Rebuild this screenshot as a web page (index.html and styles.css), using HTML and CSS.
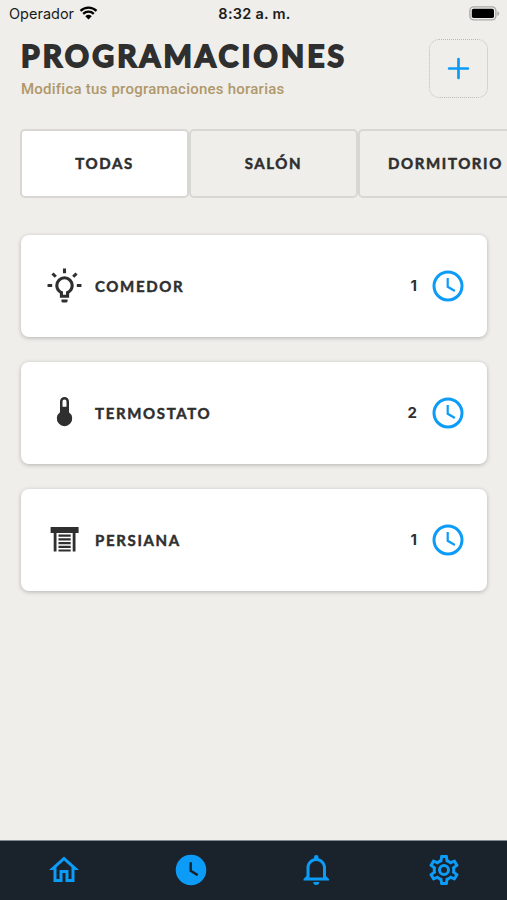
FILE: index.html
```html
<!DOCTYPE html>
<html lang="es">
<head>
    <meta charset="UTF-8">
    <meta name="viewport" content="width=device-width, initial-scale=1.0">
    <title>Programaciones</title>
    <link rel="stylesheet" href="styles.css">
</head>
<body>
    <div class="status-bar">
        <div class="carrier">
            <span>Operador</span>
            <svg class="wifi" viewBox="0 0 18 14">
                <path d="M1 4.9a11.6 11.6 0 0 1 16 0M3.7 7.8a7.7 7.7 0 0 1 10.6 0" fill="none" stroke="#000" stroke-width="2.3"/>
                <path d="M9 13.4L5.8 10.2a4.7 4.7 0 0 1 6.4 0z"/>
            </svg>
        </div>
        <div class="time">8:32 a. m.</div>
        <svg class="battery" viewBox="0 0 31 15">
            <rect x=".9" y=".9" width="26" height="13" rx="3.8" fill="none" stroke="#aaa9a7" stroke-width="1.4"/>
            <rect x="2.8" y="2.8" width="22.2" height="9.2" rx="1.8"/>
            <path d="M28.4 5.2c2.4.8 2.4 3.8 0 4.6z" fill="#aaa9a7"/>
        </svg>
    </div>

    <header class="header">
        <div>
            <h1>PROGRAMACIONES</h1>
            <p class="subtitle">Modifica tus programaciones horarias</p>
        </div>
        <button class="add">
            <svg viewBox="0 0 22 22"><path d="M11 2v18M2 11h18"/></svg>
        </button>
    </header>

    <nav class="tabs">
        <div class="tab active">TODAS</div>
        <div class="tab">SALÓN</div>
        <div class="tab">DORMITORIO</div>
    </nav>

    <main class="list">
        <div class="card">
            <svg class="device" viewBox="0 0 24 24">
                <path d="M20,11H23V13H20V11M1,11H4V13H1V11M13,1V4H11V1H13M4.92,3.5L7.05,5.64L5.63,7.05L3.5,4.93L4.92,3.5M16.95,5.63L19.07,3.5L20.5,4.93L18.37,7.05L16.95,5.63M12,6A6,6 0 0,1 18,12C18,14.22 16.79,16.16 15,17.2V20H9V17.2C7.21,16.16 6,14.22 6,12A6,6 0 0,1 12,6M14,21V22A1,1 0 0,1 13,23H11A1,1 0 0,1 10,22V21H14M11,18H13V15.87C14.73,15.43 16,13.86 16,12A4,4 0 0,0 12,8A4,4 0 0,0 8,12C8,13.86 9.27,15.43 11,15.87V18Z"/>
            </svg>
            <span class="name">COMEDOR</span>
            <span class="count">1</span>
            <svg class="clock" viewBox="0 0 32 32"><circle cx="16" cy="16" r="14"/><path d="M15.7 8v8.8l7.2 4.2"/></svg>
        </div>
        <div class="card">
            <svg class="device" viewBox="0 0 37 37">
                <path fill-rule="evenodd" d="M14 7.5a4.5 4.5 0 0 1 9 0v10.7a7.7 7.7 0 1 1-9 0zM16.5 7.5v5.2h4V7.5a2 2 0 0 0-4 0z"/>
            </svg>
            <span class="name">TERMOSTATO</span>
            <span class="count">2</span>
            <svg class="clock" viewBox="0 0 32 32"><circle cx="16" cy="16" r="14"/><path d="M15.7 8v8.8l7.2 4.2"/></svg>
        </div>
        <div class="card">
            <svg class="device" viewBox="0 0 37 37">
                <path d="M4.6 5.9h28v6h-28zM7.7 11.9h2.8v18.7H7.7zM26.7 11.9h2.8v18.7h-2.8zM12.5 13.5h12.2v2.3H12.5zM12.5 17.3h12.2v2.3H12.5zM12.5 21h12.2v2.3H12.5zM12.5 24.7h12.2V27H12.5zM12.5 28.4h12.2v2.2H12.5z"/>
            </svg>
            <span class="name">PERSIANA</span>
            <span class="count">1</span>
            <svg class="clock" viewBox="0 0 32 32"><circle cx="16" cy="16" r="14"/><path d="M15.7 8v8.8l7.2 4.2"/></svg>
        </div>
    </main>

    <footer class="bottom-nav">
        <svg viewBox="0 0 24 24"><path d="M12 5.69l5 4.5V18h-2v-6H9v6H7v-7.81l5-4.5M12 3L2 12h3v8h6v-6h2v6h6v-8h3L12 3z"/></svg>
        <svg viewBox="0 0 24 24"><circle cx="12" cy="12" r="10.2"/><path class="hands" d="M11.8 6.9v5.7l4.7 2.8"/></svg>
        <svg viewBox="0 0 24 24"><path d="M16,17H7V10.5C7,8 9,6 11.5,6C14,6 16,8 16,10.5M18,16V10.5C18,7.43 15.86,4.86 13,4.18V3.5A1.5,1.5 0 0,0 11.5,2A1.5,1.5 0 0,0 10,3.5V4.18C7.13,4.86 5,7.43 5,10.5V16L3,18V19H20V18M11.5,22A2,2 0 0,0 13.5,20H9.5A2,2 0 0,0 11.5,22Z"/></svg>
        <svg viewBox="0 0 24 24"><path d="M12,8A4,4 0 0,1 16,12A4,4 0 0,1 12,16A4,4 0 0,1 8,12A4,4 0 0,1 12,8M12,10A2,2 0 0,0 10,12A2,2 0 0,0 12,14A2,2 0 0,0 14,12A2,2 0 0,0 12,10M10,22C9.75,22 9.54,21.82 9.5,21.58L9.13,18.93C8.5,18.68 7.96,18.34 7.44,17.94L4.95,18.95C4.73,19.03 4.46,18.95 4.34,18.73L2.34,15.27C2.21,15.05 2.27,14.78 2.46,14.63L4.57,12.97L4.5,12L4.57,11L2.46,9.37C2.27,9.22 2.21,8.95 2.34,8.73L4.34,5.27C4.46,5.05 4.73,4.96 4.95,5.05L7.44,6.05C7.96,5.66 8.5,5.32 9.13,5.07L9.5,2.42C9.54,2.18 9.75,2 10,2H14C14.25,2 14.46,2.18 14.5,2.42L14.87,5.07C15.5,5.32 16.04,5.66 16.56,6.05L19.05,5.05C19.27,4.96 19.54,5.05 19.66,5.27L21.66,8.73C21.79,8.95 21.73,9.22 21.54,9.37L19.43,11L19.5,12L19.43,13L21.54,14.63C21.73,14.78 21.79,15.05 21.66,15.27L19.66,18.73C19.54,18.95 19.27,19.04 19.05,18.95L16.56,17.95C16.04,18.34 15.5,18.68 14.87,18.93L14.5,21.58C14.46,21.82 14.25,22 14,22H10M11.25,4L10.88,6.61C9.68,6.86 8.62,7.5 7.85,8.39L5.44,7.35L4.69,8.65L6.8,10.2C6.4,11.37 6.4,12.64 6.8,13.8L4.68,15.36L5.43,16.66L7.86,15.62C8.63,16.5 9.68,17.14 10.87,17.38L11.24,20H12.76L13.13,17.39C14.32,17.14 15.37,16.5 16.14,15.62L18.57,16.66L19.32,15.36L17.2,13.81C17.6,12.64 17.6,11.37 17.2,10.2L19.31,8.65L18.56,7.35L16.15,8.39C15.38,7.5 14.32,6.86 13.12,6.62L12.75,4H11.25Z"/></svg>
    </footer>
</body>
</html>
```

FILE: styles.css
```css
* {
    box-sizing: border-box;
}
body {
    margin: 0;
    height: 900px;
    display: flex;
    flex-direction: column;
    background-color: #efeeea;
    color: #2f2f2f;
    font-family: Lato, sans-serif;
    overflow: hidden;
}
.status-bar {
    display: grid;
    grid-template-columns: 1fr auto 1fr;
    align-items: center;
    height: 27px;
    padding: 0 7px 0 9px;
    color: #1b1b1b;
    font-family: Inter, sans-serif;
    font-size: 14.5px;
}
.carrier {
    display: flex;
    align-items: center;
    gap: 5px;
}
.wifi {
    width: 19px;
    height: 14px;
    margin-top: -1px;
}
.time {
    font-weight: 600;
    letter-spacing: 0.25px;
}
.battery {
    width: 31px;
    height: 15px;
    margin-top: -1px;
    justify-self: end;
}
.header {
    display: flex;
    justify-content: space-between;
    height: 102px;
    padding: 12px 19px 0 21px;
}
h1 {
    margin: -2px 0 0;
    font-size: 30px;
    line-height: 36px;
    font-weight: 700;
    letter-spacing: 3.15px;
    -webkit-text-stroke: 1.8px #2f2f2f;
    stroke-linejoin: round;
}
.subtitle {
    margin: 7px 0 0;
    font-family: Roboto, sans-serif;
    font-size: 15px;
    line-height: 18px;
    font-weight: 500;
    letter-spacing: 0.23px;
    color: #b0986b;
}
.add {
    width: 59px;
    height: 59px;
    padding: 0;
    display: flex;
    justify-content: center;
    align-items: center;
    border: 1px dotted #b9b8b5;
    border-radius: 10px;
    background: none;
}
.add svg {
    width: 23px;
    height: 23px;
    stroke: #0c9cf8;
    stroke-width: 2.6;
    stroke-linecap: round;
}
.tabs {
    display: flex;
    height: 69px;
    padding-left: 20px;
    overflow: hidden;
}
.tab {
    flex: 0 0 169px;
    display: flex;
    justify-content: center;
    align-items: center;
    padding-bottom: 1px;
    border: 2px solid #d8d7d4;
    border-radius: 5px;
    font-size: 15px;
    font-weight: 700;
    letter-spacing: 1.6px;
    -webkit-text-stroke: 0.5px #2f2f2f;
}
.tab:last-child {
    flex-basis: 175px;
}
.tab.active {
    background-color: #fff;
}
.list {
    flex: 1;
    display: flex;
    flex-direction: column;
    gap: 25px;
    padding: 37px 20px 0 21px;
}
.card {
    display: flex;
    align-items: center;
    height: 102px;
    padding: 0 23px 1px 25px;
    border-radius: 8px;
    background-color: #fff;
    box-shadow: 0 1px 4px rgba(0, 0, 0, 0.25);
}
.device {
    width: 37px;
    height: 37px;
    fill: #2f2f2f;
}
.name {
    margin-left: 12px;
    font-size: 15px;
    font-weight: 700;
    letter-spacing: 1.65px;
    -webkit-text-stroke: 0.45px #2f2f2f;
}
.count {
    margin-left: auto;
    font-family: Inter, sans-serif;
    font-size: 15px;
    font-weight: 700;
}
.clock {
    width: 32px;
    height: 32px;
    margin-left: 15px;
    fill: none;
    stroke: #0c9cf8;
    stroke-width: 3;
}
.clock path {
    stroke-width: 2.2;
}
.bottom-nav {
    display: grid;
    grid-template-columns: repeat(4, 1fr);
    justify-items: center;
    align-items: center;
    height: 60px;
    padding: 0 0 1px 1px;
    border-top: 1px solid #7f8a90;
    background-color: #1a222b;
}
.bottom-nav svg {
    width: 36px;
    height: 36px;
    fill: #0c9cf8;
}
.bottom-nav .hands {
    fill: none;
    stroke: #1a222b;
    stroke-width: 1.6;
}
```
